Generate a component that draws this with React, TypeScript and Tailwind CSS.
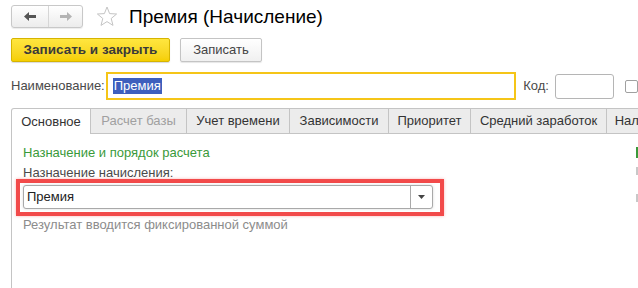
import React from "react";

const font = { fontFamily: '"Liberation Sans", Arial, sans-serif' };

const tabs = [
  { label: "Основное", w: 80, active: true },
  { label: "Расчет базы", w: 96, disabled: true },
  { label: "Учет времени", w: 103 },
  { label: "Зависимости", w: 99 },
  { label: "Приоритет", w: 82 },
  { label: "Средний заработок", w: 136 },
  { label: "Налоги", w: 60 },
];

export default function App() {
  return (
    <div
      className="relative h-[288px] w-[638px] overflow-hidden bg-white text-[13px] text-[#333]"
      style={font}
    >
      {/* header */}
      <div className="flex h-[31px] items-center pl-[11px] pt-[1px]">
        <div className="flex h-[23px] w-[72px] rounded-[3px] border border-[#c8c8c8] bg-gradient-to-b from-white to-[#ececec] shadow-[0_1px_1px_rgba(0,0,0,0.08)]">
          <div className="flex w-[37px] items-center justify-center border-r border-[#d6d6d6]">
            <svg width="12" height="9" viewBox="0 0 12 9">
              <path d="M0 4.5 L5 0 V3 H12 V6 H5 V9 Z" fill="#555" />
            </svg>
          </div>
          <div className="flex flex-1 items-center justify-center">
            <svg width="12" height="9" viewBox="0 0 12 9">
              <path d="M12 4.5 L7 0 V3 H0 V6 H7 V9 Z" fill="#b3b3b3" />
            </svg>
          </div>
        </div>
        <svg className="ml-[13px]" width="22" height="21" viewBox="0 0 22 21">
          <path
            d="M11 1 L13.6 7.6 L20.6 8 L15.2 12.5 L17 19.4 L11 15.6 L5 19.4 L6.8 12.5 L1.4 8 L8.4 7.6 Z"
            fill="none"
            stroke="#c4c4c4"
            strokeWidth="1"
            strokeLinejoin="round"
          />
        </svg>
        <div className="ml-[11px] text-[19px] leading-none text-black">Премия (Начисление)</div>
      </div>

      {/* command bar */}
      <div className="mt-[7px] flex h-[24px] gap-[10px] pl-[11px]">
        <div className="flex w-[159px] items-center justify-center rounded-[2px] border border-[#d6b400] bg-gradient-to-b from-[#ffe63e] to-[#f5cf00] text-[13.5px] font-bold text-[#3a3a3a] shadow-[0_1px_1px_rgba(0,0,0,0.15)]">
          Записать и закрыть
        </div>
        <div className="flex w-[82px] items-center justify-center rounded-[2px] border border-[#c4c4c4] bg-gradient-to-b from-white to-[#f0f0f0] text-[#444] shadow-[0_1px_1px_rgba(0,0,0,0.1)]">
          Записать
        </div>
      </div>

      {/* name row */}
      <div className="mt-[10px] flex h-[28px] items-center pl-[11px]">
        <span className="text-[#4a4a4a]">Наименование:</span>
        <div className="ml-[1px] flex h-[28px] w-[416px] items-center border-2 border-[#f5c518] pl-[5px]">
          <span className="bg-[#3d5fbd] px-[1px] leading-[16px] text-white">Премия</span>
        </div>
        <span className="ml-[7px] text-[#4a4a4a]">Код:</span>
        <div className="ml-[6px] h-[25px] w-[60px] rounded-[3px] border border-[#b5b5b5]" />
        <div className="ml-[11px] h-[13px] w-[13px] rounded-[2px] border border-[#a0a0a0]" />
      </div>

      {/* tabs */}
      <div className="mt-[8px] flex h-[26px] pl-[11px]">
        {tabs.map((t) => (
          <div
            key={t.label}
            style={{ width: t.w }}
            className={
              t.active
                ? "flex shrink-0 items-center justify-center rounded-tl-[3px] border-l border-t border-r border-[#c4c4c4] bg-white text-[#333]"
                : "flex shrink-0 items-center justify-center overflow-hidden whitespace-nowrap border-r border-t border-b border-[#c4c4c4] bg-[#ececec] " +
                  (t.disabled ? "text-[#a0a0a0]" : "text-[#333]")
            }
          >
            {t.label}
          </div>
        ))}
      </div>

      {/* tab page */}
      <div className="ml-[11px] h-[200px] border-l border-[#c4c4c4] pl-[11px] pt-[11px]">
        <div className="leading-[16px] text-[#3a9a3a]">Назначение и порядок расчета</div>
        <div className="mt-[4px] leading-[16px] text-[#4a4a4a]">Назначение начисления:</div>
        <div className="-ml-[7px] -mt-[2px] w-[428px] border-4 border-[#f24a4a] pb-[3px] pl-[3px] pr-[7px] pt-[2px] shadow-[0_0_3px_rgba(242,74,74,0.4)]">
          <div className="flex h-[24px] items-center rounded-[3px] border border-[#a9a9a9] bg-white shadow-[0_0_3px_rgba(0,0,0,0.15)]">
            <span className="flex-1 pl-[3px] text-[#222]">Премия</span>
            <div className="flex h-full w-[22px] items-center justify-center border-l border-[#a9a9a9]">
              <svg width="7" height="4" viewBox="0 0 7 4">
                <path d="M0 0 H7 L3.5 4 Z" fill="#444" />
              </svg>
            </div>
          </div>
        </div>
        <div className="mt-[1px] leading-[16px] text-[#8c8c8c]">Результат вводится фиксированной суммой</div>
      </div>

      {/* right cut-off column */}
      <div className="absolute left-[636px] top-[147px] h-[11px] w-[2px] bg-[#3a9a3a]" />
      <div className="absolute left-[636px] top-[167px] h-[8px] w-[2px] bg-[#c8c8c8]" />
      <div className="absolute left-[636px] top-[194px] h-[8px] w-[2px] bg-[#c8c8c8]" />
    </div>
  );
}
